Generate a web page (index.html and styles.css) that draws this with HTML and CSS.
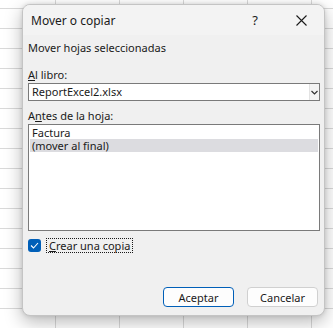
FILE: index.html
```html
<!DOCTYPE html>
<html lang="es">
<head>
  <meta charset="UTF-8">
  <title>Mover o copiar</title>
  <link rel="stylesheet" href="styles.css">
</head>
<body>
  <div class="dialog">
    <div class="titlebar">
      <span class="title">Mover o copiar</span>
      <span class="help">?</span>
      <span class="close">
        <svg width="11" height="11" viewBox="0 0 11 11"><path d="M0.5 0.5 L10.5 10.5 M10.5 0.5 L0.5 10.5" stroke="#1a1a1a" stroke-width="1.1" fill="none"/></svg>
      </span>
    </div>

    <div class="content">
      <div class="line intro">Mover hojas seleccionadas</div>

      <div class="line label-book"><u>A</u>l libro:</div>
      <div class="select">
        <span class="select-value">ReportExcel2.xlsx</span>
        <span class="select-btn">
          <svg width="7" height="5" viewBox="0 0 7 5"><path d="M0.5 1 L3.5 4 L6.5 1" stroke="#333" stroke-width="1.2" fill="none"/></svg>
        </span>
      </div>

      <div class="line label-sheet">A<u>n</u>tes de la hoja:</div>
      <div class="listbox">
        <div class="item">Factura</div>
        <div class="item selected">(mover al final)</div>
      </div>

      <div class="check-row">
        <span class="checkbox">
          <svg width="9" height="7" viewBox="0 0 9 7"><path d="M1 3.5 L3.5 6 L8 1" stroke="#fff" stroke-width="1.1" fill="none"/></svg>
        </span>
        <span class="check-label"><u>C</u>rear una copia</span>
      </div>

      <div class="buttons">
        <button class="btn default">Aceptar</button>
        <button class="btn">Cancelar</button>
      </div>
    </div>
  </div>
</body>
</html>
```

FILE: styles.css
```css
* {
  box-sizing: border-box;
}

body {
  margin: 0;
  padding: 0;
  width: 333px;
  height: 328px;
  overflow: hidden;
  font-family: 'Noto Sans', sans-serif;
  font-size: 11px;
  color: #1a1a1a;
  background-color: #ffffff;
  background-image:
    linear-gradient(to right, #d9d9d9 1px, transparent 1px),
    linear-gradient(to bottom, #d9d9d9 1px, transparent 1px);
  background-size: 64px 20px;
  background-position: 55px 8px;
}

.dialog {
  margin: 4px 0 0 22px;
  width: 303px;
  height: 312px;
  background: #f0f0f0;
  border: 1px solid #c4c4c4;
  border-radius: 8px;
  box-shadow: 0 6px 18px rgba(0, 0, 0, 0.28), 0 0 4px rgba(0, 0, 0, 0.12);
  overflow: hidden;
}

.titlebar {
  display: flex;
  align-items: center;
  height: 30px;
  background: #f3f3f3;
}

.title {
  flex: 1;
  padding-left: 8px;
  font-size: 12px;
}

.help {
  width: 46px;
  text-align: center;
  font-size: 13px;
}

.close {
  width: 46px;
  display: flex;
  justify-content: center;
  align-items: center;
}

.content {
  padding: 0 4px 0 5px;
}

.line {
  height: 16px;
  line-height: 16px;
  white-space: nowrap;
}

.intro {
  margin-top: 5px;
}

.label-book {
  margin-top: 11px;
}

.select {
  display: flex;
  height: 18px;
  border: 1px solid #7a7a7a;
  background: #fff;
}

.select-value {
  flex: 1;
  padding-left: 3px;
  line-height: 16px;
}

.select-btn {
  width: 10px;
  border-left: 1px solid #e3e3e3;
  background: #f4f4f4;
  display: flex;
  align-items: center;
  justify-content: center;
}

.label-sheet {
  margin-top: 7px;
}

.listbox {
  height: 107px;
  border: 1px solid #7a7a7a;
  background: #fff;
  padding: 1px;
}

.item {
  height: 13px;
  line-height: 13px;
  padding-left: 2px;
}

.item.selected {
  background: #dcdce0;
}

.check-row {
  display: flex;
  align-items: center;
  margin-top: 7px;
  height: 15px;
}

.checkbox {
  width: 13px;
  height: 13px;
  border-radius: 3px;
  background: #005fb8;
  display: flex;
  align-items: center;
  justify-content: center;
}

.check-label {
  margin-left: 5px;
  padding: 0 2px;
  height: 15px;
  line-height: 13px;
  border: 1px dotted #1a1a1a;
}

.buttons {
  display: flex;
  justify-content: flex-end;
  gap: 13px;
  margin-top: 34px;
  padding-right: 2px;
}

.btn {
  width: 71px;
  height: 20px;
  padding: 0;
  font-family: 'Noto Sans', sans-serif;
  font-size: 11px;
  color: #1a1a1a;
  background: #fdfdfd;
  border: 1px solid #d0d0d0;
  border-radius: 4px;
}

.btn.default {
  border-color: #005fb8;
}
```
